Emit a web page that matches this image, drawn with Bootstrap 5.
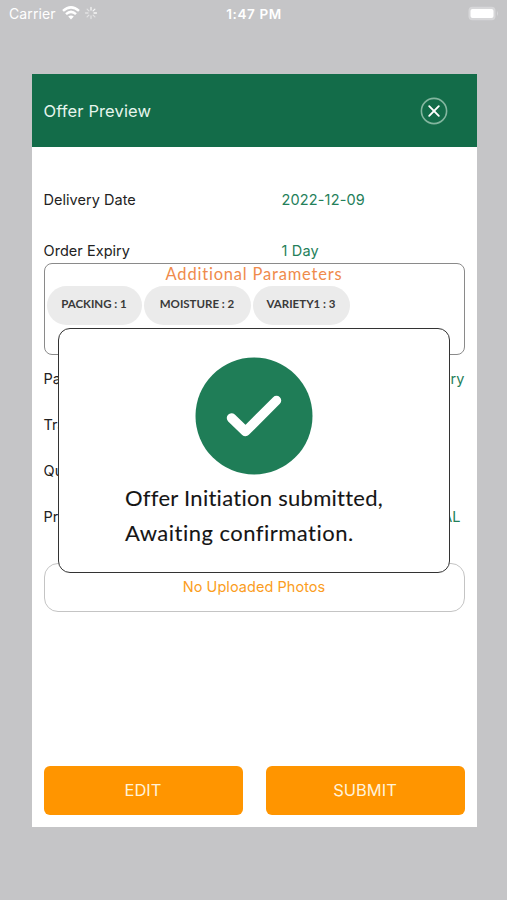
<!DOCTYPE html>
<html lang="en">
<head>
<meta charset="utf-8">
<meta name="viewport" content="width=device-width, initial-scale=1">
<title>Offer Preview</title>
<link href="https://cdn.jsdelivr.net/npm/bootstrap@5.3.0/dist/css/bootstrap.min.css" rel="stylesheet">
<style>
  body { font-family: Inter, "Liberation Sans", sans-serif; background: #c5c5c7; height: 900px; overflow: hidden; color: #222; }
  .status-bar { height: 74px; padding: 4px 8px 0 9px; color: #fff; }
  .status-bar > div { height: 20px; width: 150px; font-size: 14px; line-height: 20px; letter-spacing: .12px; }
  .status-bar .clock { font-weight: 600; font-size: 13.5px; letter-spacing: .6px; }
  .status-bar svg { margin-bottom: 2px; }
  .wifi { margin-left: 6px; }
  .panel { width: 445px; height: 753px; margin-left: 31.5px; background: #fff; }
  .panel-top { height: 73.4px; padding: 2px 29px 0 12px; background: #136c49; color: #e6f5ed; font-size: 16.5px; letter-spacing: .12px; }
  .panel-top svg { margin-top: -2px; }
  .panel-main { padding: 26px 12px 12.5px; }
  .line-row { height: 46px; font-size: 14.5px; white-space: nowrap; letter-spacing: .04px; }
  .line-row.tall { height: 51px; padding-top: 2px; }
  .line-row.last { height: 39px; padding-top: 14px; }
  .line-row.split > :last-child { width: 183px; letter-spacing: .15px; }
  .green { color: #24805a; }
  .params { height: 92px; border: 1px solid #8a8a8a; border-radius: 8px; padding: 0 2px; font-family: Lato, sans-serif; }
  .params-title { height: 22px; line-height: 20px; font-size: 16.5px; letter-spacing: .8px; color: #ef8b4c; }
  .pills { gap: 2px; }
  .pill { height: 39px; padding-bottom: 4px; border-radius: 20px; background: #ebebeb; color: #3a3a3a; font-size: 11.5px; font-weight: 700; white-space: nowrap; }
  .w-a { width: 95px; } .w-b { width: 107px; } .w-c { width: 97px; }
  .photos { height: 49px; margin-top: 23.5px; border: 1px solid #c4c4c4; border-radius: 14px; padding-bottom: 1px; color: #fb9d22; font-size: 14.5px; letter-spacing: .05px; }
  .btn-act { width: 199px; height: 49px; border: 0; border-radius: 6px; background: #ff9500; color: #fff2d9; font-size: 16.5px; }
  .btn-act:hover { background: #ef8b00; color: #fff; }
  .notice { left: 58px; top: 328px; width: 391.5px; height: 245px; border: 1.5px solid #333; border-radius: 12px; background: #fff; padding-top: 28px; }
  .notice-text { margin: 6px 0 0 66px; font-family: Lato, sans-serif; font-size: 22px; line-height: 34.5px; letter-spacing: .28px; color: #151515; white-space: nowrap; -webkit-text-stroke: .1px; }
  .notice-text span { display: block; width: max-content; }
  .notice-text span + span { letter-spacing: .48px; }
</style>
</head>
<body>
<header class="status-bar d-flex justify-content-between align-items-start">
  <div class="d-flex align-items-center"><span>Carrier</span>
    <svg width="18" height="14" viewBox="0 0 18 14" class="wifi" fill="none" stroke="#fff" stroke-width="2.5"><path d="M1 4.9Q9-2.1 17 4.9M4 8.1Q9 3.6 14 8.1"/><path d="M6.2 10.6Q9 8.2 11.8 10.6L9 13.6Z" fill="#fff" stroke="none"/></svg>
    <svg width="14" height="14" viewBox="-7 -7 14 14" class="ms-1" stroke="#fff" stroke-width="1.3" stroke-linecap="round"><path d="M0-3V-5.5M2.1-2.1 3.9-3.9M3 0H5.5" opacity=".85"/><path d="M2.1 2.1 3.9 3.9M0 3V5.5M-2.1 2.1-3.9 3.9M-3 0H-5.5M-2.1-2.1-3.9-3.9" opacity=".5"/></svg>
  </div>
  <div class="clock text-center"><span>1:47 PM</span></div>
  <div class="d-flex justify-content-end align-items-center">
    <svg width="31" height="15" viewBox="0 0 31 15"><rect x=".5" y=".8" width="27" height="13.4" rx="4" fill="#d7d7d9"/><rect x="2.5" y="3" width="23" height="9" rx="2" fill="#fff"/><path d="M29 5Q31 7.5 29 10Z" fill="#d7d7d9"/></svg>
  </div>
</header>

<main class="panel d-flex flex-column">
  <div class="panel-top d-flex align-items-center justify-content-between">
    <span>Offer Preview</span>
    <svg width="28" height="28" viewBox="0 0 28 28" fill="none" role="button" aria-label="Close"><circle cx="14" cy="14" r="12.6" stroke="#83b69f" stroke-width="1.6"/><path d="M9.2 9.2 18.8 18.8M18.8 9.2 9.2 18.8" stroke="#fff" stroke-width="1.9" stroke-linecap="round"/></svg>
  </div>
  <div class="panel-main d-flex flex-column flex-grow-1">
    <div class="line-row tall split d-flex align-items-center justify-content-between"><span>Delivery Date</span><span class="green">2022-12-09</span></div>
    <div class="line-row last split d-flex align-items-center justify-content-between"><span>Order Expiry</span><span class="green">1 Day</span></div>
    <div class="params">
      <div class="params-title text-center"><span>Additional Parameters</span></div>
      <div class="pills d-flex">
        <div class="pill w-a d-flex align-items-center justify-content-center"><span>PACKING : 1</span></div>
        <div class="pill w-b d-flex align-items-center justify-content-center"><span>MOISTURE : 2</span></div>
        <div class="pill w-c d-flex align-items-center justify-content-center"><span>VARIETY1 : 3</span></div>
      </div>
    </div>
    <div class="line-row d-flex align-items-center justify-content-between"><span>Payment</span><span class="green">On Delivery</span></div>
    <div class="line-row d-flex align-items-center"><span>Transport</span></div>
    <div class="line-row d-flex align-items-center"><span>Quantity</span></div>
    <div class="line-row d-flex align-items-center justify-content-between"><span>Price</span><span class="green pe-1">QUINTAL</span></div>
    <div class="photos d-flex align-items-center justify-content-center"><span>No Uploaded Photos</span></div>
    <div class="d-flex justify-content-between mt-auto">
      <button type="button" class="btn btn-act">EDIT</button>
      <button type="button" class="btn btn-act">SUBMIT</button>
    </div>
  </div>
</main>

<section class="notice position-absolute" role="alertdialog" aria-label="Offer submitted">
  <svg class="d-block mx-auto" width="118" height="118" viewBox="0 0 118 118"><circle cx="59" cy="59" r="58.5" fill="#1f7d57"/><path d="M36.5 61 50.5 74.5 81.5 43.5" fill="none" stroke="#fff" stroke-width="9.5" stroke-linecap="round" stroke-linejoin="round"/></svg>
  <div class="notice-text"><span>Offer Initiation submitted,</span><span>Awaiting confirmation.</span></div>
</section>
<script src="https://cdn.jsdelivr.net/npm/bootstrap@5.3.0/dist/js/bootstrap.bundle.min.js"></script>
</body>
</html>
